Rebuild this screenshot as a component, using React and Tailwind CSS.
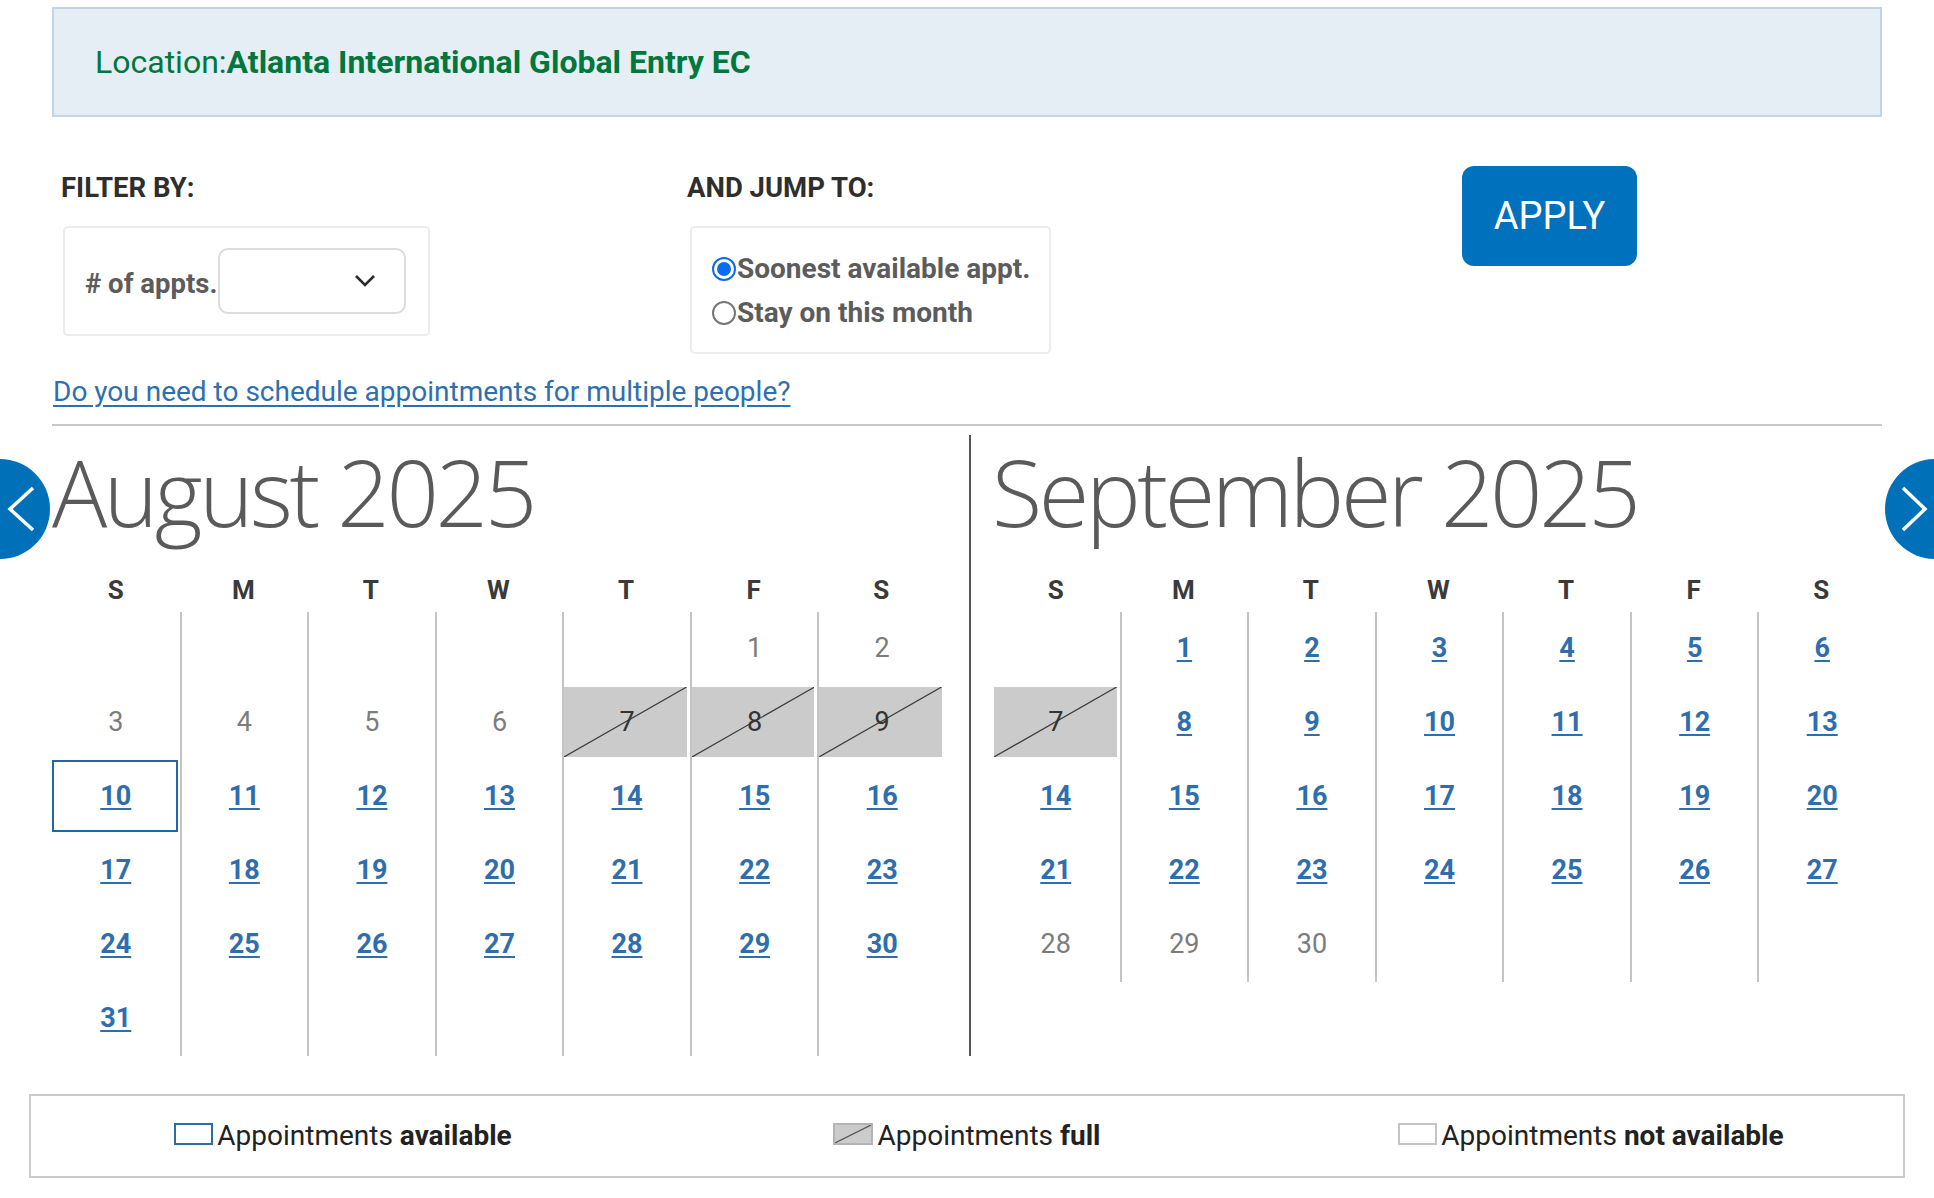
import React from 'react';

const A = 'a';
const G = 'g';
const F = 'f';
const S = 'sel';

const august = [
  [null, null, null, null, null, [1, G], [2, G]],
  [[3, G], [4, G], [5, G], [6, G], [7, F], [8, F], [9, F]],
  [[10, S], [11, A], [12, A], [13, A], [14, A], [15, A], [16, A]],
  [[17, A], [18, A], [19, A], [20, A], [21, A], [22, A], [23, A]],
  [[24, A], [25, A], [26, A], [27, A], [28, A], [29, A], [30, A]],
  [[31, A], null, null, null, null, null, null],
];

const september = [
  [null, [1, A], [2, A], [3, A], [4, A], [5, A], [6, A]],
  [[7, F], [8, A], [9, A], [10, A], [11, A], [12, A], [13, A]],
  [[14, A], [15, A], [16, A], [17, A], [18, A], [19, A], [20, A]],
  [[21, A], [22, A], [23, A], [24, A], [25, A], [26, A], [27, A]],
  [[28, G], [29, G], [30, G], null, null, null, null],
];

const days = ['S', 'M', 'T', 'W', 'T', 'F', 'S'];

const Slash = ({ color = '#3a3a3a' }) => (
  <svg className="absolute inset-0 w-full h-full" viewBox="0 0 100 100" preserveAspectRatio="none">
    <line x1="0" y1="100" x2="100" y2="0" stroke={color} strokeWidth="1.2" vectorEffect="non-scaling-stroke" />
  </svg>
);

const DayCell = ({ cell, col }) => {
  const [d, s] = cell || [];
  return (
    <div
      className={`relative h-[74px] flex items-center justify-center ${
        col > 0 ? 'border-l-2 border-[#c4c4c4]' : ''
      }`}
    >
      {s === F && (
        <div className={`absolute top-px bottom-[3px] right-[3px] bg-[#cbcbcb] ${col === 0 ? 'left-[2px]' : 'left-0'}`}>
          <Slash />
        </div>
      )}
      {s === S && (
        <div className="absolute top-0 left-0 right-[2px] bottom-[2px] border-2 border-[#1f6aa6]"></div>
      )}
      {cell && (
        <span
          className={`relative leading-none text-[27px] ${
            s === A || s === S
              ? 'font-bold text-[#2f6ead] underline underline-offset-[3px]'
              : s === F
              ? 'text-[#333]'
              : 'text-[#7c7c7c]'
          }`}
        >
          {d}
        </span>
      )}
    </div>
  );
};

const Month = ({ title, weeks }) => (
  <div>
    <h2 className="mt-[11px] h-[92px] font-['Open_Sans',sans-serif] font-light text-[92px] leading-none tracking-[-0.037em] text-[#5a5a5a] whitespace-nowrap">
      {title}
    </h2>
    <div className="grid grid-cols-7 w-[893px] mt-[39px] h-[26px]">
      {days.map((d, i) => (
        <div key={i} className="text-center text-[26px] leading-none font-bold text-[#3a3a3a]">
          {d}
        </div>
      ))}
    </div>
    <div className="grid grid-cols-7 w-[893px] mt-[9px]">
      {weeks.map((w, r) =>
        w.map((c, i) => <DayCell key={`${r}-${i}`} cell={c} col={i} />)
      )}
    </div>
  </div>
);

const Radio = ({ checked }) =>
  checked ? (
    <span className="w-[24px] h-[24px] rounded-full border-2 border-[#0b6cf0] bg-white flex items-center justify-center shrink-0">
      <span className="w-[14px] h-[14px] rounded-full bg-[#0b6cf0]"></span>
    </span>
  ) : (
    <span className="w-[24px] h-[24px] rounded-full border-2 border-[#777] bg-white shrink-0"></span>
  );

const Arrow = ({ dir }) => (
  <div
    className={`absolute top-[459px] w-[100px] h-[100px] rounded-full bg-[#0070b9] ${
      dir === 'left' ? 'left-[-50px]' : 'left-[1885px]'
    }`}
  >
    <svg className="w-full h-full" viewBox="0 0 100 100">
      {dir === 'left' ? (
        <polyline points="83,29 60,50 83,71" fill="none" stroke="white" strokeWidth="3.5" />
      ) : (
        <polyline points="18,29 40,50 18,71" fill="none" stroke="white" strokeWidth="3.5" />
      )}
    </svg>
  </div>
);

const LegendItem = ({ kind, children }) => (
  <div className="flex items-center justify-center">
    {kind === 'available' && <span className="w-[39px] h-[22px] border-2 border-[#2a6ea6] -mt-[3px]"></span>}
    {kind === 'full' && (
      <span className="relative w-[40px] h-[22px] border-2 border-[#b4b4b4] bg-[#cbcbcb] -mt-[3px]">
        <Slash color="#555" />
      </span>
    )}
    {kind === 'none' && <span className="w-[39px] h-[22px] border-2 border-[#c4c4c4] -mt-[3px]"></span>}
    <span className="ml-[4px] text-[28px] leading-none text-[#222]">{children}</span>
  </div>
);

export default function App() {
  return (
    <div className="relative w-[1934px] h-[1198px] overflow-hidden bg-white font-['Roboto','Liberation_Sans',sans-serif]">
      <div className="mx-[52px] pt-[7px]">
        {/* location banner */}
        <div className="h-[110px] border-2 border-[#c2d4e6] bg-[#e5edf5] flex items-center pl-[41px]">
          <p className="text-[32px] leading-none text-[#00773b]">
            Location:<span className="font-bold">Atlanta International Global Entry EC</span>
          </p>
        </div>

        {/* filters */}
        <div className="flex items-start mt-[49px]">
          <div className="w-[625px] pl-[9px] pt-[8px]">
            <h3 className="text-[27.5px] leading-none font-bold text-[#2e2e2e]">FILTER BY:</h3>
            <div className="ml-[2px] mt-[24px] w-[367px] h-[110px] border-2 border-[#ececec] rounded-[5px] flex items-center pl-[20px] pr-[18px]">
              <span className="relative top-[3px] whitespace-nowrap text-[27.5px] leading-none font-bold text-[#5c5c5c]">
                # of appts.
              </span>
              <div className="shrink-0 ml-[1px] w-[188px] h-[66px] border-2 border-[#dcdcdc] rounded-[10px] bg-white flex items-center justify-end pr-[28px]">
                <svg width="22" height="14" viewBox="0 0 22 14">
                  <polyline points="2,2 11,11 20,2" fill="none" stroke="#2b2b2b" strokeWidth="2.6" />
                </svg>
              </div>
            </div>
          </div>

          <div className="w-[775px] pl-[10px] pt-[8px]">
            <h3 className="text-[27.5px] leading-none font-bold text-[#2e2e2e]">AND JUMP TO:</h3>
            <div className="ml-[3px] mt-[24px] w-[361px] h-[128px] border-2 border-[#ececec] rounded-[5px] pt-[19px] pl-[20px]">
              <label className="h-[44px] flex items-center">
                <Radio checked />
                <span className="ml-px text-[28px] leading-none font-bold text-[#5c5c5c]">
                  Soonest available appt.
                </span>
              </label>
              <label className="h-[44px] flex items-center">
                <Radio />
                <span className="ml-px text-[28px] leading-none font-bold text-[#5c5c5c]">
                  Stay on this month
                </span>
              </label>
            </div>
          </div>

          <div className="pl-[10px]">
            <button className="w-[175px] h-[100px] rounded-[12px] bg-[#0071bc] text-white text-[38px] leading-none">
              APPLY
            </button>
          </div>
        </div>

        <a href="#" className="block mt-[24px] pl-px text-[28px] leading-none text-[#2f6fae] underline underline-offset-[4px]">
          Do you need to schedule appointments for multiple people?
        </a>

        <div className="mt-[18px] h-[2px] bg-[#c8c8c8]"></div>

        {/* calendars */}
        <div className="flex mt-[9px]">
          <div className="w-[917px] pr-[24px]">
            <Month title="August 2025" weeks={august} />
          </div>
          <div className="flex-1 border-l-2 border-[#555] pl-[21px]">
            <Month title="September 2025" weeks={september} />
          </div>
        </div>

        {/* legend */}
        <div className="-mx-[23px] mt-[38px] h-[84px] border-2 border-[#cbcbcb] grid grid-cols-3 items-center">
          <LegendItem kind="available">
            Appointments <span className="font-bold">available</span>
          </LegendItem>
          <LegendItem kind="full">
            Appointments <span className="font-bold">full</span>
          </LegendItem>
          <LegendItem kind="none">
            Appointments <span className="font-bold">not available</span>
          </LegendItem>
        </div>
      </div>

      <Arrow dir="left" />
      <Arrow dir="right" />
    </div>
  );
}
